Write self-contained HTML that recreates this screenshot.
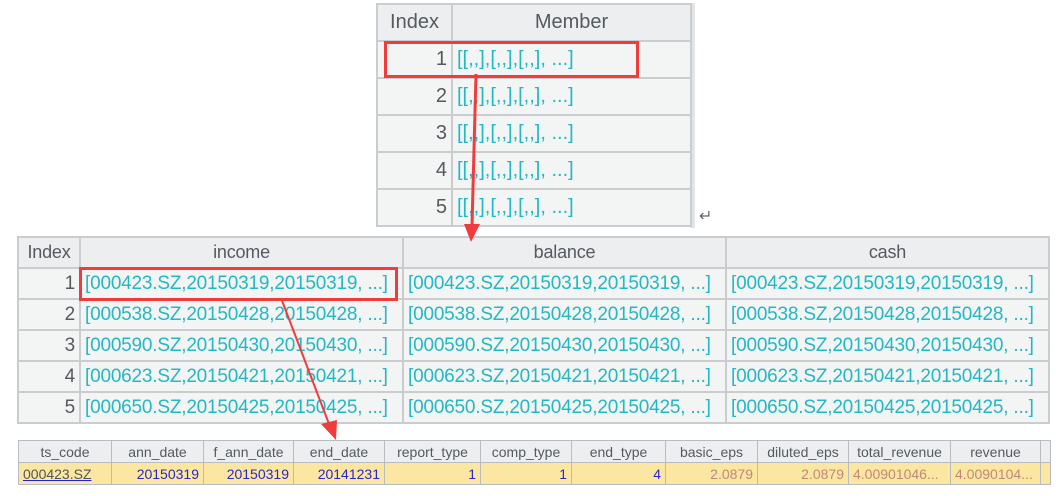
<!DOCTYPE html><html><head><style>
body{margin:0;width:1056px;height:496px;background:#fff;position:relative;overflow:hidden;font-family:"Liberation Sans",sans-serif}
table{border-collapse:collapse;position:absolute;table-layout:fixed}
td,th{border:2px solid #c9cdd0;padding:0 4px;white-space:nowrap;overflow:hidden;font-weight:normal}
th{background:#eceef0;color:#555a60;text-align:center}
td{background:#f3f4f4;color:#22b8c4}
td.i{color:#555a60;text-align:right}
#t1{left:376px;top:3px;font-size:20px}
#t1 th,#t1 td{height:35px}
#t2{left:17px;top:236px;font-size:19px;letter-spacing:-0.2px}
#t2 th,#t2 td{height:29px;border-width:2px}
#t2 th{font-size:18px}
#t3{left:18px;top:440px;font-size:14px}
#t3 th,#t3 td{height:21px;border-width:1px;border-color:#b8bcc0}
#t3 td{background:#fbe7a1;text-align:right;color:#2828c8}
#t3 td.e{color:#c08878}
.box{position:absolute;border:3px solid #f23c3c}
</style></head><body>
<div style="position:absolute;left:690px;top:3px;width:5px;height:225px;background:#e2e4e6"></div>
<table id="t1"><colgroup><col style="width:75px"><col style="width:239px"></colgroup>
<tr><th>Index</th><th>Member</th></tr>
<tr><td class="i">1</td><td>[[,,],[,,],[,,], ...]</td></tr>
<tr><td class="i">2</td><td>[[,,],[,,],[,,], ...]</td></tr>
<tr><td class="i">3</td><td>[[,,],[,,],[,,], ...]</td></tr>
<tr><td class="i">4</td><td>[[,,],[,,],[,,], ...]</td></tr>
<tr><td class="i">5</td><td>[[,,],[,,],[,,], ...]</td></tr>
</table>
<div style="position:absolute;left:699px;top:206px;font-size:16px;color:#666">↵</div>
<div class="box" style="left:384px;top:41px;width:249px;height:31px"></div>
<table id="t2"><colgroup><col style="width:62px"><col style="width:323px"><col style="width:323px"><col style="width:323px"></colgroup>
<tr><th>Index</th><th>income</th><th>balance</th><th>cash</th></tr>
<tr><td class="i">1</td><td>[000423.SZ,20150319,20150319, ...]</td><td>[000423.SZ,20150319,20150319, ...]</td><td>[000423.SZ,20150319,20150319, ...]</td></tr>
<tr><td class="i">2</td><td>[000538.SZ,20150428,20150428, ...]</td><td>[000538.SZ,20150428,20150428, ...]</td><td>[000538.SZ,20150428,20150428, ...]</td></tr>
<tr><td class="i">3</td><td>[000590.SZ,20150430,20150430, ...]</td><td>[000590.SZ,20150430,20150430, ...]</td><td>[000590.SZ,20150430,20150430, ...]</td></tr>
<tr><td class="i">4</td><td>[000623.SZ,20150421,20150421, ...]</td><td>[000623.SZ,20150421,20150421, ...]</td><td>[000623.SZ,20150421,20150421, ...]</td></tr>
<tr><td class="i">5</td><td>[000650.SZ,20150425,20150425, ...]</td><td>[000650.SZ,20150425,20150425, ...]</td><td>[000650.SZ,20150425,20150425, ...]</td></tr>
</table>
<div class="box" style="left:79px;top:267px;width:313px;height:28px"></div>
<table id="t3"><colgroup><col style="width:93px"><col style="width:92px"><col style="width:90px"><col style="width:91px"><col style="width:96px"><col style="width:91px"><col style="width:94px"><col style="width:92px"><col style="width:91px"><col style="width:102px"><col style="width:90px"><col style="width:10px"></colgroup>
<tr><th>ts_code</th><th>ann_date</th><th>f_ann_date</th><th>end_date</th><th>report_type</th><th>comp_type</th><th>end_type</th><th>basic_eps</th><th>diluted_eps</th><th>total_revenue</th><th>revenue</th><th></th></tr>
<tr><td style="text-align:left;color:#555;text-decoration:underline;text-decoration-color:#2020e0">000423.SZ</td><td>20150319</td><td>20150319</td><td>20141231</td><td>1</td><td>1</td><td>4</td><td class="e">2.0879</td><td class="e">2.0879</td><td class="e" style="text-align:left">4.00901046...</td><td class="e" style="text-align:left">4.0090104...</td><td></td></tr>
</table>
<svg style="position:absolute;left:0;top:0" width="1056" height="496">
<path d="M476 74 L472 226" stroke="#f03c3c" stroke-width="3"/>
<path d="M464 224 L480 224 L471 242 Z" fill="#f03c3c"/>
<path d="M281 298 L329 424" stroke="#f03c3c" stroke-width="2"/>
<path d="M321 424 L337 420 L336 440 Z" fill="#f03c3c"/>
</svg>
</body></html>
